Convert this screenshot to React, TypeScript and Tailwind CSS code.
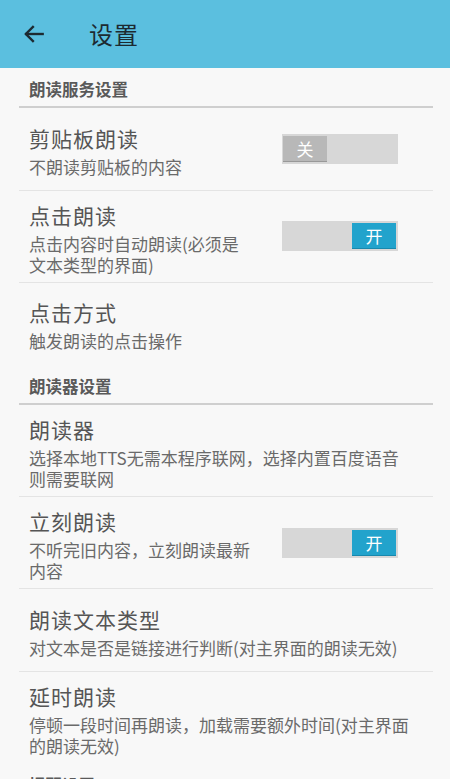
import { ReactNode } from 'react';

type Pref = {
  title: string;
  summary: string;
  toggle?: 'on' | 'off';
  last?: boolean;
};

type Section = {
  header: string;
  items: Pref[];
};

const sections: Section[] = [
  {
    header: '朗读服务设置',
    items: [
      { title: '剪贴板朗读', summary: '不朗读剪贴板的内容', toggle: 'off' },
      { title: '点击朗读', summary: '点击内容时自动朗读(必须是文本类型的界面)', toggle: 'on' },
      { title: '点击方式', summary: '触发朗读的点击操作', last: true },
    ],
  },
  {
    header: '朗读器设置',
    items: [
      { title: '朗读器', summary: '选择本地TTS无需本程序联网，选择内置百度语音则需要联网' },
      { title: '立刻朗读', summary: '不听完旧内容，立刻朗读最新内容', toggle: 'on' },
      { title: '朗读文本类型', summary: '对文本是否是链接进行判断(对主界面的朗读无效)' },
      { title: '延时朗读', summary: '停顿一段时间再朗读，加载需要额外时间(对主界面的朗读无效)', last: true },
    ],
  },
  {
    header: '提醒设置',
    items: [],
  },
];

function Toggle({ state }: { state: 'on' | 'off' }) {
  const on = state === 'on';
  return (
    <div className={`flex h-[30px] w-[116px] items-center bg-[#d7d7d7] px-[1px] ${on ? 'justify-end pr-[2px]' : 'justify-start'}`}>
      <div
        className={`flex h-[26px] w-[44px] items-center justify-center border-b text-[17px] leading-none text-white ${
          on ? 'border-[#1888ad] bg-[#22a3cc]' : 'border-[#999999] bg-[#b8b8b8]'
        }`}
      >
        {on ? '开' : '关'}
      </div>
    </div>
  );
}

function Row({ pref }: { pref: Pref }) {
  let widget: ReactNode = null;
  if (pref.toggle) widget = <Toggle state={pref.toggle} />;

  return (
    <div
      className={`ml-[19px] mr-[17px] flex min-h-[82.5px] items-center border-b py-[7px] pl-[10px] ${
        pref.last ? 'border-transparent' : 'border-[#e4e4e4]'
      } ${widget ? '' : 'pr-[22px]'}`}
    >
      <div className={`pt-[3px] ${widget ? 'w-[224px]' : 'flex-1'}`}>
        <div className="text-[21px] leading-[28px] tracking-[1px] text-[#555555]">{pref.title}</div>
        <div className="mt-[4px] text-[17px] leading-[21px] text-[#6a6a6a]">{pref.summary}</div>
      </div>
      {widget && <div className="flex flex-1 pl-[29px]">{widget}</div>}
    </div>
  );
}

export default function App() {
  return (
    <div
      className="h-[779px] overflow-hidden bg-[#f8f8f8]"
      style={{ fontFamily: '"Noto Sans CJK SC", "Noto Sans", sans-serif' }}
    >
      <div className="flex h-[68px] items-center bg-[#5bbfdf]">
        <svg
          className="ml-[21px] h-[26px] w-[26px] text-[#1d2a31]"
          viewBox="0 0 24 24"
          fill="none"
          stroke="currentColor"
          strokeWidth="2.2"
          strokeLinecap="square"
        >
          <path d="M20 12H5" />
          <path d="M11 5.5L4.5 12L11 18.5" />
        </svg>
        <div className="ml-[42px] text-[24px] leading-none tracking-[1px] text-[#1d2a31]">设置</div>
      </div>

      {sections.map((section) => (
        <div key={section.header}>
          <div className="ml-[19px] mr-[17px] border-b-2 border-[#cfcfcf] pb-[7px] pl-[10px] pt-[11px]">
            <div className="text-[16.5px] font-semibold leading-[20px] text-[#5a5a5a]">{section.header}</div>
          </div>
          {section.items.map((item) => (
            <Row key={item.title} pref={item} />
          ))}
        </div>
      ))}
    </div>
  );
}
